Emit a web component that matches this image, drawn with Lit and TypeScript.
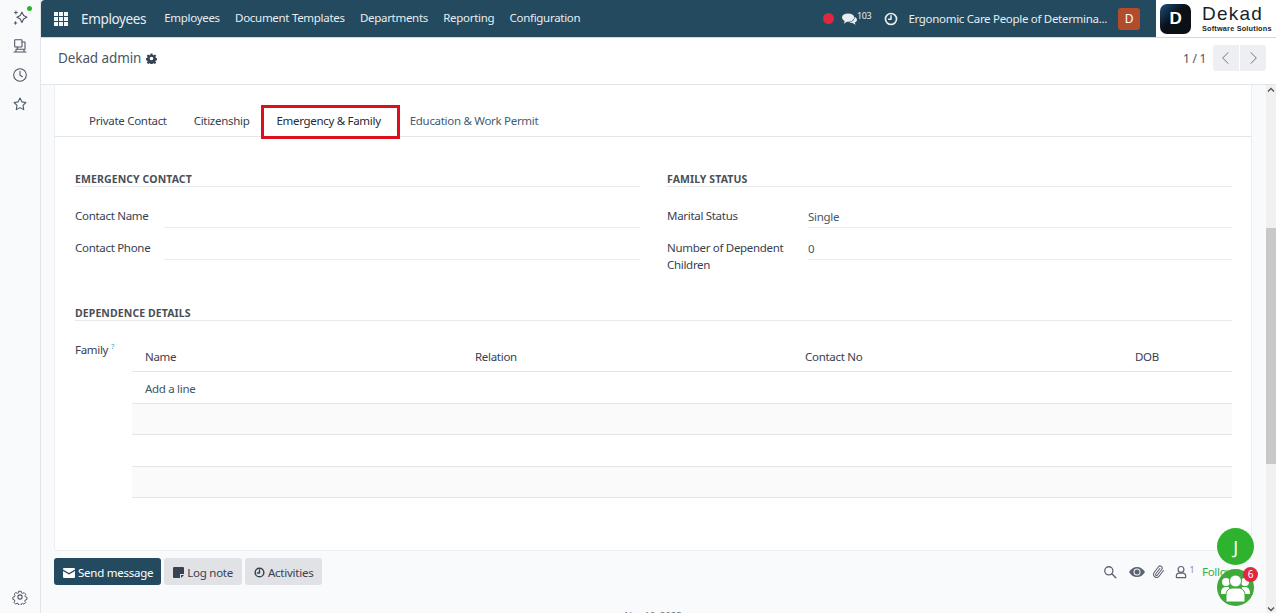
import { LitElement, css, html, svg } from 'lit'
import { customElement } from 'lit/decorators.js'

const NAV_ITEMS = ['Employees', 'Document Templates', 'Departments', 'Reporting', 'Configuration']
const TABS = ['Private Contact', 'Citizenship', 'Emergency & Family', 'Education & Work Permit']
const COLUMNS = ['Name', 'Relation', 'Contact No', 'DOB']

const icon = (size: number, body: unknown, cls = '') => html`
  <svg class=${cls} width=${size} height=${size} viewBox="0 0 24 24" fill="none" stroke="currentColor"
    stroke-width="1.6" stroke-linecap="round" stroke-linejoin="round">${body}</svg>
`

const clockPath = svg`<circle cx="12" cy="12" r="9.5"/><path d="M12 6.5V12.5L15.5 14.5"/>`
const gearPath = svg`<circle cx="12" cy="12" r="3.2"/><path d="M10 2.5h4l.6 2.8 1.9.8 2.4-1.5 2.8 2.8-1.5 2.4.8 1.9 2.5.6v4l-2.8.6-.8 1.9 1.5 2.4-2.8 2.8-2.4-1.5-1.9.8-.6 2.4h-4l-.6-2.6-1.9-.8-2.4 1.5-2.8-2.8 1.5-2.4-.8-1.9-2.5-.6v-4l2.8-.6.8-1.9-1.5-2.4 2.8-2.8 2.4 1.5 1.9-.8z" transform="translate(1.2 1.2) scale(.9)"/>`

@customElement('app-root')
export class AppRoot extends LitElement {
  static styles = css`
    :host {
      display: block;
      font-family: 'Noto Sans', 'Open Sans', sans-serif;
      font-size: 11.5px;
      letter-spacing: -0.3px;
      color: #374151;
    }

    .page {
      position: relative;
      display: flex;
      height: 613px;
      overflow: hidden;
      background: #f9fafb;
    }

    /* left rail */
    .rail {
      flex: 0 0 40px;
      display: flex;
      flex-direction: column;
      align-items: center;
      border-right: 1px solid #e2e5ea;
      color: #4b5563;
      padding-top: 9px;
    }
    .rail-item { position: relative; height: 29px; }
    .rail-dot {
      position: absolute;
      top: -3px;
      right: -3px;
      width: 5px;
      height: 5px;
      border-radius: 50%;
      background: #2fb32f;
    }
    .rail-gear { margin-top: auto; margin-bottom: 5px; }

    .main { flex: 1; min-width: 0; display: flex; flex-direction: column; }

    /* top bar */
    .navbar {
      flex: 0 0 37px;
      display: flex;
      align-items: center;
      background: #234a5f;
      color: #e8edf0;
      border-bottom: 1px solid #cfd8dd;
      border-top-left-radius: 4px;
    }
    .apps {
      display: grid;
      grid-template-columns: repeat(3, 4px);
      grid-auto-rows: 4px;
      gap: 1px;
      margin-left: 13px;
    }
    .apps i { background: #f4f6f7; }
    .brand { margin-left: 13px; font-size: 13.5px; letter-spacing: -0.35px; }
    .menu { display: flex; gap: 15.3px; margin: 0 0 2px 18px; }
    .systray { margin-left: auto; display: flex; align-items: center; color: #e8edf0; }
    .record { width: 11px; height: 11px; border-radius: 50%; background: #e1263f; }
    .chat { margin-left: 8px; display: flex; }
    .chat-count { font-size: 9px; margin-bottom: 7px; }
    .clock { margin-left: 13px; display: flex; }
    .company { margin-left: 10px; }
    .avatar {
      margin-left: 11px;
      width: 22px;
      height: 22px;
      border-radius: 3px;
      background: #b34c2d;
      color: #fff;
      display: flex;
      align-items: center;
      justify-content: center;
      font-size: 12px;
    }
    .logo {
      margin-left: 16px;
      width: 120px;
      height: 37px;
      background: #fff;
      display: flex;
      align-items: center;
      gap: 11px;
      padding-left: 4px;
      box-sizing: border-box;
      color: #1b1f24;
    }
    .logo-mark {
      width: 31px;
      height: 30px;
      border-radius: 7px;
      background: linear-gradient(135deg, #1f4f80 0%, #0b0f16 45%, #0b0f16 100%);
      display: flex;
      align-items: center;
      justify-content: center;
      color: #fff;
      font-family: 'Liberation Sans', sans-serif;
      font-weight: 700;
      font-size: 17px;
    }
    .logo-text { display: flex; flex-direction: column; line-height: 1; }
    .logo-name {
      font-family: 'Liberation Sans', sans-serif;
      font-size: 19px;
      letter-spacing: 1.2px;
    }
    .logo-sub {
      font-family: 'Liberation Sans', sans-serif;
      font-weight: 700;
      font-size: 7.3px;
      letter-spacing: 0.2px;
      margin-top: 2px;
      white-space: nowrap;
    }

    /* control panel */
    .control {
      flex: 0 0 40px;
      display: flex;
      align-items: center;
      background: #fff;
      border-bottom: 1px solid #e2e5ea;
      padding: 0 10px 6px 17px;
    }
    .crumb { font-size: 13.5px; color: #4b5563; letter-spacing: -0.1px; }
    .cog { margin-left: 5px; display: flex; color: #374151; }
    .pager { margin-left: auto; display: flex; align-items: center; color: #4b5563; font-size: 12px; }
    .pager-btns { display: flex; gap: 1px; margin-left: 7px; }
    .pager-btn {
      width: 26px;
      height: 26px;
      background: #eeeff2;
      display: flex;
      align-items: center;
      justify-content: center;
      color: #6b7280;
    }
    .pager-btn:first-child { border-radius: 3px 0 0 3px; }
    .pager-btn:last-child { border-radius: 0 3px 3px 0; }

    /* scrolling body */
    .body { flex: 1; min-height: 0; display: flex; }
    .content { flex: 1; min-width: 0; padding: 0 14px 0 13px; overflow: hidden; }
    .scrollbar {
      flex: 0 0 10px;
      background: #f0f0f0;
      display: flex;
      flex-direction: column;
      align-items: center;
      justify-content: space-between;
      position: relative;
      color: #505050;
    }
    .thumb {
      position: absolute;
      left: 0;
      right: 0;
      top: 143px;
      height: 236px;
      background: #c8c8c8;
    }

    .sheet {
      height: 466px;
      box-sizing: border-box;
      background: #fff;
      border: 1px solid #eceef1;
      border-top: 0;
      border-radius: 0 0 4px 4px;
      padding-top: 20px;
    }
    .tabs {
      display: flex;
      height: 31px;
      border-bottom: 1px solid #e2e5ea;
      padding-left: 20.5px;
    }
    .tab {
      padding: 0 13.5px;
      line-height: 31px;
      color: #374151;
      white-space: nowrap;
    }
    .tab:last-child { color: #3f5d73; }
    .tab.active {
      color: #1f2937;
      border: 3px solid #de0f1c;
      height: 34px;
      line-height: 26px;
      box-sizing: border-box;
      background: #fff;
      padding: 0 16px 0 12px;
      margin: 0 -3.5px 0 -1.5px;
    }

    .form { padding: 0 19px 0 20px; }
    .groups {
      display: grid;
      grid-template-columns: 1fr 1fr;
      column-gap: 27px;
      padding-top: 35px;
    }
    .title {
      font-size: 10.5px;
      font-weight: 700;
      color: #4a4f57;
      line-height: 14px;
      border-bottom: 1px solid #e7e9ed;
      height: 14px;
      letter-spacing: 0.1px;
    }
    .rows { padding-top: 16px; }
    .row { display: flex; height: 32px; }
    .label {
      flex: 0 0 89px;
      line-height: 17px;
      padding-top: 4px;
      box-sizing: border-box;
      color: #374151;
    }
    .right .label { flex-basis: 141px; }
    .field {
      flex: 1;
      height: 22px;
      padding-top: 2px;
      line-height: 24px;
      border-bottom: 1px solid #eaecef;
      color: #4b5563;
    }
    .deps { margin-top: 39px; }
    .family { display: flex; margin-top: 20px; }
    .family-label { flex: 0 0 57px; line-height: 17px; }
    .family-label sup {
      font-size: 7px;
      color: #35a5cc;
      margin-left: 3px;
      vertical-align: 5px;
      line-height: 0;
    }
    .table { flex: 1; min-width: 0; }
    .tr {
      display: grid;
      grid-template-columns: 330px 330px 330px 1fr;
      height: 31.5px;
      box-sizing: border-box;
      border-bottom: 1px solid #e2e5ea;
      line-height: 34px;
      padding-left: 13px;
    }
    .tr.head { color: #374151; line-height: 32px; height: 30px; box-sizing: content-box; }
    .tr.odd { background: #fafafa; }
    .add { color: #3b5566; }

    /* chatter */
    .chatter {
      display: flex;
      align-items: center;
      gap: 3px;
      margin-top: 7px;
      height: 27px;
    }
    .btn {
      height: 25px;
      padding: 2px 9px 0 9px;
      display: flex;
      align-items: center;
      gap: 3px;
      background: #e0e2e6;
      border-radius: 3px;
      color: #374151;
      letter-spacing: -0.25px;
    }
    .btn.primary { background: #234a5f; color: #fff; padding-right: 8px; }
    .tools { margin-left: auto; display: flex; align-items: center; color: #5b6470; }
    .tools svg { display: block; }
    .tools .gap-eye { margin-left: 12px; }
    .tools .gap-clip { margin-left: 6px; }
    .tools .gap-person { margin-left: 8px; }
    .tools small { font-size: 8px; align-self: flex-start; margin-left: 2px; color: #7d8590; }
    .follow { color: #2fb344; margin-left: 8px; width: 50px; }
    .date { text-align: center; margin-top: 24px; color: #6b7280; font-size: 10px; }

    /* floating chat launchers */
    .fab {
      position: absolute;
      left: 1217px;
      width: 37px;
      height: 37px;
      border-radius: 50%;
      background: #2fb32f;
      color: #fff;
      display: flex;
      align-items: center;
      justify-content: center;
    }
    .fab.user { top: 528px; font-size: 18px; }
    .fab.group { top: 569px; background: #3fa93a; }
    .fab-badge {
      position: absolute;
      top: -2px;
      right: -4px;
      width: 15px;
      height: 15px;
      border-radius: 50%;
      background: #e1263f;
      color: #fff;
      font-size: 10px;
      line-height: 15px;
      text-align: center;
    }
  `

  render() {
    return html`
      <div class="page">
        <nav class="rail">
          <div class="rail-item">
            ${icon(17, svg`<path d="M14 4.5l2.4 4.8 4.6 2.4-4.6 2.4L14 19l-2.4-4.9L7 11.7l4.6-2.4z"/><path d="M5.5 3v4M3.5 5h4M5 18v3.5M3.2 19.8h3.6" stroke-width="1.4"/>`)}
            <span class="rail-dot"></span>
          </div>
          <div class="rail-item">
            ${icon(16, svg`<rect x="4" y="2.5" width="11" height="11" rx="1"/><path d="M15 6h4.5v11M8 13.5V17M3 21h18M6 17h12v4H6z"/>`)}
          </div>
          <div class="rail-item">${icon(16, clockPath)}</div>
          <div class="rail-item">
            ${icon(16, svg`<path d="M12 3l2.8 5.8 6.2.9-4.5 4.4 1.1 6.3L12 17.4l-5.6 3 1.1-6.3L3 9.7l6.2-.9z"/>`)}
          </div>
          <div class="rail-gear">${icon(16, gearPath)}</div>
        </nav>

        <div class="main">
          <header class="navbar">
            <div class="apps">${Array.from({ length: 9 }, () => html`<i></i>`)}</div>
            <div class="brand">Employees</div>
            <div class="menu">${NAV_ITEMS.map((item) => html`<span>${item}</span>`)}</div>
            <div class="systray">
              <span class="record"></span>
              <span class="chat">
                <svg width="15" height="14" viewBox="0 0 16 14" fill="currentColor">
                  <ellipse cx="6.5" cy="5.5" rx="6.5" ry="4.5"/>
                  <path d="M3 8.5L2 12l4-2.5z"/>
                  <path d="M13.5 4.5c1.6.9 2.5 2 2.5 3.2 0 1.3-1 2.4-2.4 3l1 2.3-3.4-1.8c-1.4 0-2.7-.4-3.6-1.1 3.3 0 6-1.5 5.9-5.6z"/>
                </svg>
              </span>
              <span class="chat-count">103</span>
              <span class="clock">${icon(14, svg`<circle cx="12" cy="12" r="9.5" stroke-width="2.8"/><path d="M12 6.5V12.5H8" stroke-width="2.6"/>`)}</span>
              <span class="company">Ergonomic Care People of Determina...</span>
              <span class="avatar">D</span>
              <div class="logo">
                <div class="logo-mark">D</div>
                <div class="logo-text">
                  <span class="logo-name">Dekad</span>
                  <span class="logo-sub">Software Solutions</span>
                </div>
              </div>
            </div>
          </header>

          <div class="control">
            <span class="crumb">Dekad admin</span>
            <span class="cog">
              <svg width="11" height="11" viewBox="0 0 24 24" fill="currentColor">
                <path fill-rule="evenodd" d="M10 1h4l.7 3.2 2 .9 2.8-1.800 2.800 2.800-1.800 2.800.9 2 3.200.7v4l-3.200.7-.9 2 1.800 2.800-2.800 2.800-2.800-1.800-2 .9-.7 3.200h-4l-.7-3.200-2-.9-2.800 1.800-2.800-2.800 1.800-2.800-.9-2-3.200-.7v-4l3.200-.7.9-2-1.800-2.800 2.800-2.800 2.800 1.800 2-.9zM12 8a4 4 0 100 8 4 4 0 000-8z"/>
              </svg>
            </span>
            <div class="pager">
              <span>1 / 1</span>
              <div class="pager-btns">
                <span class="pager-btn">${icon(16, svg`<path d="M15 4l-8 8 8 8" stroke-width="1.5"/>`)}</span>
                <span class="pager-btn">${icon(16, svg`<path d="M9 4l8 8-8 8" stroke-width="1.5"/>`)}</span>
              </div>
            </div>
          </div>

          <div class="body">
            <div class="content">
              <section class="sheet">
                <div class="tabs">
                  ${TABS.map((tab, i) => html`<div class="tab ${i === 2 ? 'active' : ''}">${tab}</div>`)}
                </div>
                <div class="form">
                  <div class="groups">
                    <div>
                      <div class="title">EMERGENCY CONTACT</div>
                      <div class="rows">
                        <div class="row"><span class="label">Contact Name</span><span class="field"></span></div>
                        <div class="row"><span class="label">Contact Phone</span><span class="field"></span></div>
                      </div>
                    </div>
                    <div class="right">
                      <div class="title">FAMILY STATUS</div>
                      <div class="rows">
                        <div class="row"><span class="label">Marital Status</span><span class="field">Single</span></div>
                        <div class="row"><span class="label">Number of Dependent Children</span><span class="field">0</span></div>
                      </div>
                    </div>
                  </div>
                  <div class="deps">
                    <div class="title">DEPENDENCE DETAILS</div>
                    <div class="family">
                      <div class="family-label">Family<sup>?</sup></div>
                      <div class="table">
                        <div class="tr head">${COLUMNS.map((c) => html`<span>${c}</span>`)}</div>
                        <div class="tr"><span class="add">Add a line</span></div>
                        <div class="tr odd"></div>
                        <div class="tr"></div>
                        <div class="tr odd"></div>
                      </div>
                    </div>
                  </div>
                </div>
              </section>

              <div class="chatter">
                <span class="btn primary">
                  <svg width="12" height="10" viewBox="0 0 12 10" fill="currentColor">
                    <path d="M1 0h10a1 1 0 011 1v.5L6 5 0 1.5V1a1 1 0 011-1zM0 3l6 3.5L12 3v6a1 1 0 01-1 1H1a1 1 0 01-1-1z"/>
                  </svg>
                  Send message
                </span>
                <span class="btn">
                  <svg width="11" height="11" viewBox="0 0 11 11" fill="currentColor">
                    <path d="M0 1a1 1 0 011-1h9a1 1 0 011 1v6H7v4H1a1 1 0 01-1-1zM8 8h3l-3 3z"/>
                  </svg>
                  Log note
                </span>
                <span class="btn">
                  ${icon(11, svg`<circle cx="12" cy="12" r="9.5" stroke-width="3.2"/><path d="M12 6.5V13H7.5" stroke-width="3"/>`)}
                  Activities
                </span>
                <div class="tools">
                  ${icon(14, svg`<circle cx="10" cy="10" r="7" stroke-width="2.2"/><path d="M15.5 15.5L22 22" stroke-width="2.4"/>`)}
                  <svg class="gap-eye" width="16" height="12" viewBox="0 0 16 12" fill="currentColor">
                    <path fill-rule="evenodd" d="M8 1c3.4 0 6.3 2 8 5-1.7 3-4.6 5-8 5S1.7 9 0 6c1.7-3 4.6-5 8-5zM8 2.5a3.5 3.5 0 100 7 3.5 3.5 0 000-7z"/>
                    <circle cx="8" cy="6" r="2.5"/>
                  </svg>
                  ${icon(15, svg`<path d="M20 11.5l-8.5 8.5a5 5 0 01-7-7L13 4.5a3.3 3.3 0 014.7 4.7l-8.4 8.4a1.6 1.6 0 01-2.3-2.3l7.8-7.8" stroke-width="1.7" transform="rotate(-8 12 12)"/>`, 'gap-clip')}
                  ${icon(14, svg`<circle cx="12" cy="7.5" r="5" stroke-width="2"/><path d="M4 21.5v-2.5a5 5 0 015-5h6a5 5 0 015 5v2.5z" stroke-width="2"/>`, 'gap-person')}
                  <small>1</small>
                  <span class="follow">Follow</span>
                </div>
              </div>
              <div class="date">Nov 10, 2023</div>
            </div>

            <div class="scrollbar">
              <div class="thumb"></div>
              <svg width="8" height="8" viewBox="0 0 8 8" fill="none" stroke="currentColor" stroke-width="1.3" style="margin-top: 1px"><path d="M1 5.5L4 2.5L7 5.5"/></svg>
              <svg width="8" height="8" viewBox="0 0 8 8" fill="none" stroke="currentColor" stroke-width="1.3"><path d="M1 2.5L4 5.5L7 2.5"/></svg>
            </div>
          </div>
        </div>

        <div class="fab user">J</div>
        <div class="fab group">
          <svg width="33" height="33" viewBox="0 0 33 33" fill="#fff">
            <circle cx="7" cy="11" r="4"/>
            <circle cx="26" cy="11" r="4"/>
            <path d="M2 22c0-4 2-6 5-6h3v7H2zM31 22c0-4-2-6-5-6h-3v7h8z"/>
            <circle cx="16.5" cy="10" r="6" stroke="#3fa93a" stroke-width="1"/>
            <path d="M7 31v-7c0-4 3-7 6-7h7c3 0 6 3 6 7v7z" stroke="#3fa93a" stroke-width="1"/>
          </svg>
          <span class="fab-badge">6</span>
        </div>
      </div>
    `
  }
}

declare global {
  interface HTMLElementTagNameMap {
    'app-root': AppRoot
  }
}
